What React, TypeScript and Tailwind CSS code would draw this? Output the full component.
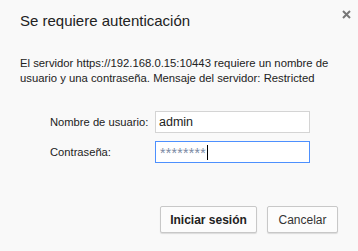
import React from 'react';

const font = { fontFamily: '"Liberation Sans", Arial, sans-serif' };

export default function App() {
  return (
    <div className="w-[358px] h-[251px] bg-[#f9f9f9] relative text-[#222]" style={font}>
      {/* close */}
      <button className="absolute left-[341px] top-[9px] w-[10px] h-[10px] flex items-center justify-center">
        <svg width="9" height="9" viewBox="0 0 9 9">
          <path d="M1 1 L8 8 M8 1 L1 8" stroke="#777" strokeWidth="2" />
        </svg>
      </button>

      <div className="pl-[20px] pt-[11px]">
        <h1 className="text-[15px] leading-[20px] text-[#222]">Se requiere autenticación</h1>
        <p className="mt-[25px] text-[11.3px] leading-[15px] w-[325px] text-[#222]">
          El servidor https://192.168.0.15:10443 requiere un nombre de usuario y una contraseña. Mensaje del servidor: Restricted
        </p>
      </div>

      <div className="mt-[25px] pl-[50px] flex flex-col gap-[8px]">
        <div className="flex items-center">
          <label className="w-[105px] text-[11.2px] whitespace-nowrap">Nombre de usuario:</label>
          <div className="w-[155px] h-[22px] border border-[#d4d4d4] bg-white flex items-center pl-[3px] text-[12.5px]">admin</div>
        </div>
        <div className="flex items-center">
          <label className="w-[105px] text-[11.2px] whitespace-nowrap">Contraseña:</label>
          <div className="w-[155px] h-[22px] border border-[#4d90fe] bg-white flex items-center pl-[4px] text-[14px] text-[#7b8aa3]">
            <span className="tracking-[0.3px] pt-[3px]">********</span>
            <span className="ml-[1px] w-px h-[15px] bg-black" />
          </div>
        </div>
      </div>

      <div className="mt-[43px] pl-[160px] flex gap-[10px]">
        <button className="w-[97px] h-[27px] border border-[#c8c8c8] rounded-[2px] bg-[#fcfcfc] shadow-[0_1px_1px_rgba(0,0,0,0.12)] text-[12px] font-bold text-[#222]">Iniciar sesión</button>
        <button className="w-[71px] h-[27px] border border-[#c8c8c8] rounded-[2px] bg-[#fcfcfc] shadow-[0_1px_1px_rgba(0,0,0,0.12)] text-[12px] text-[#333]">Cancelar</button>
      </div>
    </div>
  );
}
